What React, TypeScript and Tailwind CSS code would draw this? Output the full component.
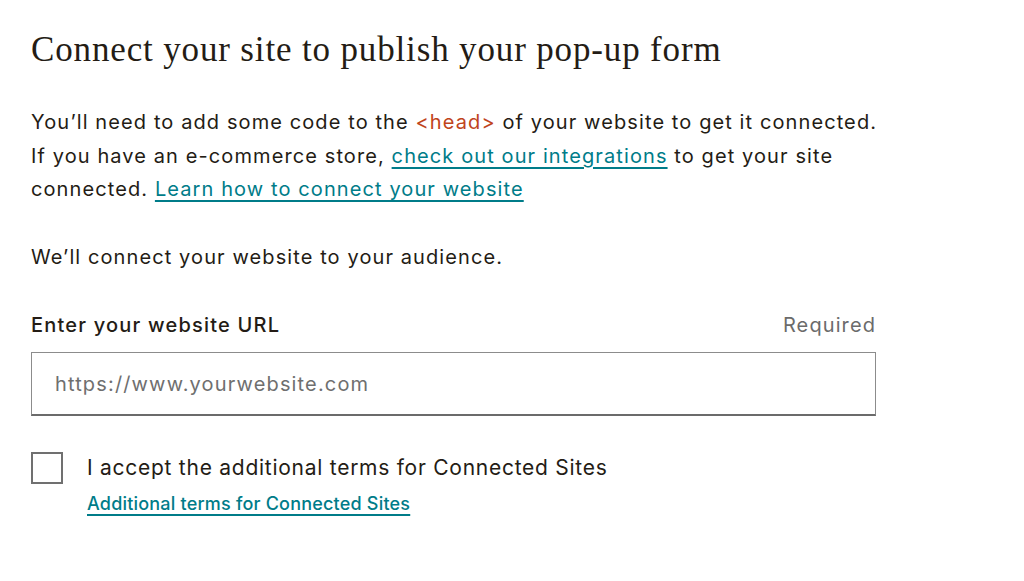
export default function App() {
  return (
    <div className="min-h-screen bg-white font-['Inter',sans-serif] text-[#241c15]">
      <div className="w-[876px] pl-[31px] pt-[28px]">
        <h1 className="whitespace-nowrap font-['Liberation_Serif',serif] text-[35px] leading-[44px] tracking-[0.85px] text-[#241c15]">
          Connect your site to publish your pop-up form
        </h1>

        <p className="mt-[34px] w-[870px] text-[20px] leading-[33.5px] tracking-[1.1px]">
          You’ll need to add some code to the <span className="text-[#c0441c]">&lt;head&gt;</span> of your website to
          get it connected.
          <br />
          If you have an e-commerce store,{" "}
          <a href="#" className="text-[#007c89] underline decoration-[1.5px] underline-offset-[4px]">
            check out our integrations
          </a>{" "}
          to get your site
          <br />
          connected.{" "}
          <a href="#" className="text-[#007c89] underline decoration-[1.5px] underline-offset-[4px]">
            Learn how to connect your website
          </a>
        </p>

        <p className="mt-[34px] text-[20px] leading-[33.5px] tracking-[1.1px]">
          We’ll connect your website to your audience.
        </p>

        <div className="mt-[34px] flex items-center justify-between">
          <label className="text-[20px] font-medium leading-[34px] tracking-[1.2px]">Enter your website URL</label>
          <span className="text-[20px] leading-[34px] tracking-[1.1px] text-[#6b6b6b]">Required</span>
        </div>

        <input
          type="text"
          placeholder="https://www.yourwebsite.com"
          className="mt-[10px] h-[64px] w-full border border-[#8c8c8c] border-b-2 border-b-[#6b6b6b] px-[23px] text-[20px] tracking-[1.15px] text-[#241c15] outline-none placeholder:text-[#6f6f6f]"
        />

        <div className="mt-[36px] flex gap-[24px]">
          <div className="h-[32px] w-[32px] shrink-0 border-2 border-[#707070] bg-white" />
          <div className="flex flex-col">
            <span className="text-[21px] leading-[32px] tracking-[0.74px]">
              I accept the additional terms for Connected Sites
            </span>
            <a
              href="#"
              className="mt-[7px] self-start text-[18px] font-medium leading-[26px] tracking-[0.2px] text-[#007c89] underline decoration-[1.5px] underline-offset-[4px]"
            >
              Additional terms for Connected Sites
            </a>
          </div>
        </div>
      </div>
    </div>
  );
}
